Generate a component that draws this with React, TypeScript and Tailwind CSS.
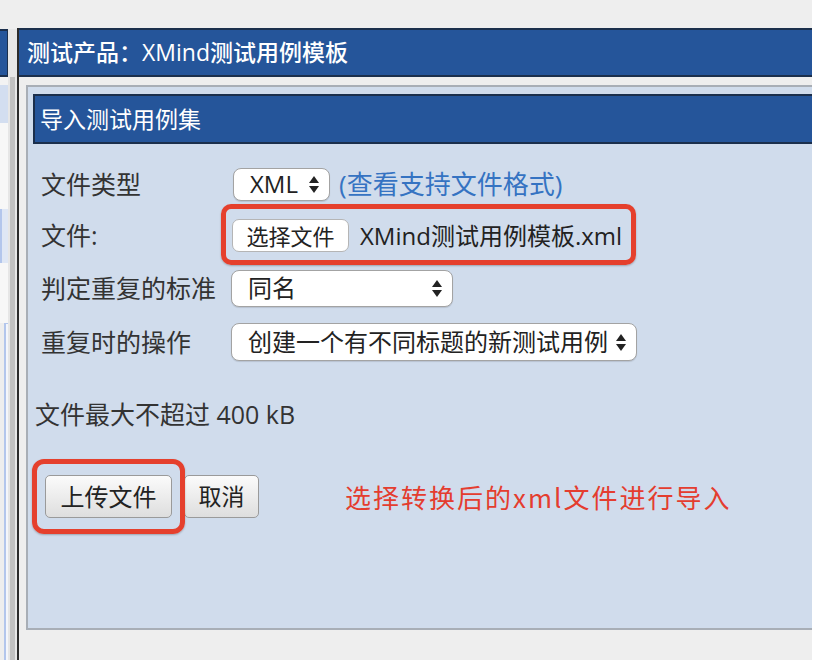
import React from "react";

const font = "font-['Open_Sans','Noto_Sans_CJK_SC',sans-serif]";

const UpDown = () => (
  <svg width="10" height="17" viewBox="0 0 10 17" className="shrink-0">
    <path d="M0 7 L5 0 L10 7 Z" fill="#222" />
    <path d="M0 10 L5 17 L10 10 Z" fill="#222" />
  </svg>
);

type SelectProps = { value: string; width: string; height: string };

const FakeSelect = ({ value, width, height }: SelectProps) => (
  <div
    className={`${width} ${height} flex items-center justify-between bg-white border border-[#a3a3a3] rounded-[8px] pl-[16px] pr-[10px] shadow-[0_1px_1px_rgba(0,0,0,0.12)] text-[24px] text-[#222]`}
  >
    <span className="leading-none whitespace-nowrap">{value}</span>
    <UpDown />
  </div>
);

const FormRow = ({ label, height, children }: { label: string; height: string; children: React.ReactNode }) => (
  <div className={`relative flex items-center ${height}`}>
    <div className="w-[190px] shrink-0 text-[25px] text-[#333] leading-none whitespace-nowrap">{label}</div>
    {children}
  </div>
);

export default function App() {
  return (
    <div className={`w-[822px] h-[660px] bg-[#eeeeee] flex overflow-hidden ${font}`}>
      {/* left neighbour panel sliver */}
      <div className="w-[17px] shrink-0 flex pt-[29px]">
        <div className="w-[8px] flex flex-col">
          <div className="h-[48px] bg-[#25559a] border-y-2 border-r border-[#1b2f4c]" />
          <div className="h-[8px] bg-[#f3f3f3]" />
          <div className="h-[38px] bg-[#d3def0]" />
          <div className="h-[86px] bg-[#f7f7f7]" />
          <div className="h-[54px] bg-[#dfe7f5] border-l-2 border-[#b3c6ec]" />
          <div className="h-[60px] bg-[#f7f7f7]" />
          <div className="flex-1 bg-[#f4f6fb] border-l-2 border-t border-[#b3c6ec] ml-[4px]" />
        </div>
        <div className="w-[9px] flex flex-col bg-[#e6e6e6]">
          <div className="h-[48px]" />
          <div className="flex-1 ml-[2px] w-[5px] bg-[#c0c0c0]" />
        </div>
      </div>

      {/* main panel */}
      <div className="w-[795px] shrink-0 mt-[28px] border-l-2 border-[#2a2a2a] flex flex-col">
        <div className="h-[49px] bg-[#25559a] border-y-2 border-[#1b2f4c] flex items-center pl-[8px] text-white text-[23px] font-medium leading-none whitespace-nowrap">
          测试产品：XMind测试用例模板
        </div>

        <div className="ml-[7px] mt-[8px] h-[545px] bg-[#d0dcec] border-2 border-r-0 border-[#a8aeb6] pt-[7px] pl-[5px] flex flex-col">
          <div className="h-[50px] bg-[#25559a] border-y-2 border-l-2 border-[#1b2f4c] flex items-center pl-[5px] text-white text-[23px] leading-none whitespace-nowrap">
            导入测试用例集
          </div>

          <div className="pt-[14px] pl-[8px] flex flex-col">
            <FormRow label="文件类型" height="h-[52px]">
              <div className="ml-[2px]">
                <FakeSelect value="XML" width="w-[97px]" height="h-[33px]" />
              </div>
              <span className="ml-[9px] text-[26px] text-[#3573c2] leading-none whitespace-nowrap">(查看支持文件格式)</span>
            </FormRow>

            <FormRow label="文件:" height="h-[51px]">
              <div className="ml-[1px] w-[117px] h-[33px] bg-white border border-[#b5b5b5] rounded-[7px] flex items-center justify-center text-[22px] text-[#222] leading-none">
                选择文件
              </div>
              <span className="ml-[11px] text-[24px] text-[#222] leading-none whitespace-nowrap">XMind测试用例模板.xml</span>
              <div className="absolute left-[180px] top-[-6px] w-[415px] h-[61px] border-[5px] border-[#e5402d] rounded-[10px] shadow-[0_1px_2px_rgba(0,0,0,0.25)]" />
            </FormRow>

            <FormRow label="判定重复的标准" height="h-[54px]">
              <FakeSelect value="同名" width="w-[222px]" height="h-[37px]" />
            </FormRow>

            <FormRow label="重复时的操作" height="h-[54px]">
              <FakeSelect value="创建一个有不同标题的新测试用例" width="w-[406px]" height="h-[38px]" />
            </FormRow>
          </div>

          <div className="mt-[30px] pl-[2px] text-[25px] text-[#333] leading-[30px] whitespace-nowrap">
            文件最大不超过 400 kB
          </div>

          <div className="mt-[46px] pl-[12px] flex items-center">
            <div className="relative">
              <div className="w-[127px] h-[43px] rounded-[5px] border border-[#9a9a9a] bg-gradient-to-b from-[#fbfbfb] to-[#dedede] flex items-center justify-center text-[24px] text-[#222] leading-none">
                上传文件
              </div>
              <div className="absolute left-[-13px] top-[-16px] w-[153px] h-[75px] border-[5px] border-[#e5402d] rounded-[12px] shadow-[0_1px_2px_rgba(0,0,0,0.25)]" />
            </div>
            <div className="ml-[12px] w-[75px] h-[43px] rounded-[5px] border border-[#9a9a9a] bg-gradient-to-b from-[#fbfbfb] to-[#dedede] flex items-center justify-center text-[23px] text-[#222] leading-none">
              取消
            </div>
            <span className="ml-[86px] text-[26px] tracking-[2px] text-[#e43d2f] leading-none whitespace-nowrap font-['Noto_Sans_CJK_SC',sans-serif]">
              选择转换后的xml文件进行导入
            </span>
          </div>
        </div>
      </div>

      <div className="flex-1 bg-white" />
    </div>
  );
}
